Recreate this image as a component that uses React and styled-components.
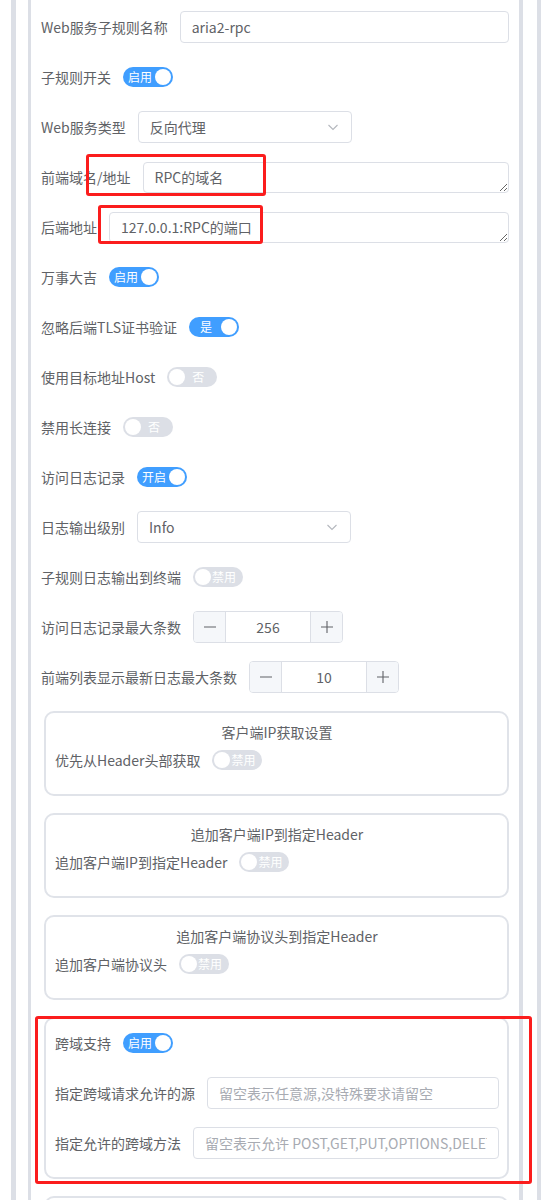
import React from "react";
import styled, { createGlobalStyle } from "styled-components";

const GlobalStyle = createGlobalStyle`
    body {
        margin: 0;
        background: #fff;
        font-family: "Noto Sans CJK SC", "Noto Sans", sans-serif;
        color: #606266;
    }
`;

function Toggle({ on, text }) {
    return (
        <Track $on={on}>
            <TrackText $on={on}>{text}</TrackText>
            <Thumb />
        </Track>
    );
}

function Stepper({ value }) {
    return (
        <StepBox>
            <StepBtn $side="left">
                <svg width="14" height="14" viewBox="0 0 14 14">
                    <path d="M1 7h12" stroke="#606266" strokeWidth="1.1" />
                </svg>
            </StepBtn>
            <StepValue>{value}</StepValue>
            <StepBtn $side="right">
                <svg width="14" height="14" viewBox="0 0 14 14">
                    <path d="M1 7h12M7 1v12" stroke="#606266" strokeWidth="1.1" />
                </svg>
            </StepBtn>
        </StepBox>
    );
}

function Select({ value }) {
    return (
        <SelectBox>
            <span>{value}</span>
            <svg width="14" height="14" viewBox="0 0 14 14">
                <path d="M2.5 5l4.5 4.5L11.5 5" fill="none" stroke="#b4b7bd" strokeWidth="1.1" />
            </svg>
        </SelectBox>
    );
}

export default function App() {
    return (
        <>
            <GlobalStyle />
            <Page>
                <Outer>
                    <Inner>
                        <Field>
                            <Label>Web服务子规则名称</Label>
                            <TextInput defaultValue="aria2-rpc" />
                        </Field>
                        <Field>
                            <Label>子规则开关</Label>
                            <Toggle on text="启用" />
                        </Field>
                        <Field>
                            <Label>Web服务类型</Label>
                            <Select value="反向代理" />
                        </Field>
                        <Field>
                            <Label>前端域名/地址</Label>
                            <TextArea rows={1} defaultValue="RPC的域名" />
                            <Mark $left={45} $top={-7} $w={180} $h={42} />
                        </Field>
                        <Field>
                            <Label>后端地址</Label>
                            <TextArea rows={1} defaultValue="127.0.0.1:RPC的端口" />
                            <Mark $left={57} $top={-6} $w={165} $h={39} />
                        </Field>
                        <Field>
                            <Label>万事大吉</Label>
                            <Toggle on text="启用" />
                        </Field>
                        <Field>
                            <Label>忽略后端TLS证书验证</Label>
                            <Toggle on text="是" />
                        </Field>
                        <Field>
                            <Label>使用目标地址Host</Label>
                            <Toggle text="否" />
                        </Field>
                        <Field>
                            <Label>禁用长连接</Label>
                            <Toggle text="否" />
                        </Field>
                        <Field>
                            <Label>访问日志记录</Label>
                            <Toggle on text="开启" />
                        </Field>
                        <Field>
                            <Label>日志输出级别</Label>
                            <Select value="Info" />
                        </Field>
                        <Field>
                            <Label>子规则日志输出到终端</Label>
                            <Toggle text="禁用" />
                        </Field>
                        <Field>
                            <Label>访问日志记录最大条数</Label>
                            <Stepper value={256} />
                        </Field>
                        <Field>
                            <Label>前端列表显示最新日志最大条数</Label>
                            <Stepper value={10} />
                        </Field>

                        <Card>
                            <CardTitle>客户端IP获取设置</CardTitle>
                            <Field>
                                <Label>优先从Header头部获取</Label>
                                <Toggle text="禁用" />
                            </Field>
                        </Card>
                        <Card>
                            <CardTitle>追加客户端IP到指定Header</CardTitle>
                            <Field>
                                <Label>追加客户端IP到指定Header</Label>
                                <Toggle text="禁用" />
                            </Field>
                        </Card>
                        <Card>
                            <CardTitle>追加客户端协议头到指定Header</CardTitle>
                            <Field>
                                <Label>追加客户端协议头</Label>
                                <Toggle text="禁用" />
                            </Field>
                        </Card>
                        <Card>
                            <Field>
                                <Label>跨域支持</Label>
                                <Toggle on text="启用" />
                            </Field>
                            <Field>
                                <Label>指定跨域请求允许的源</Label>
                                <TextInput placeholder="留空表示任意源,没特殊要求请留空" />
                            </Field>
                            <Field>
                                <Label>指定允许的跨域方法</Label>
                                <TextInput placeholder="留空表示允许 POST,GET,PUT,OPTIONS,DELETE,PATCH" />
                            </Field>
                            <Mark $left={-11} $top={-3} $w={497} $h={168} />
                        </Card>
                        {/* next card, only its top edge is in view */}
                        <Card $empty />
                    </Inner>
                </Outer>
            </Page>
        </>
    );
}

const Page = styled.div`
    padding-left: 11px;
`;

const Outer = styled.div`
    box-sizing: border-box;
    width: 530px;
    border-left: 5px solid #dcdfe6;
    border-right: 4px solid #dcdfe6;
    padding: 0 14px 0 12px;
`;

const Inner = styled.div`
    border-left: 3px solid #dcdfe6;
    border-right: 4px solid #dcdfe6;
    padding: 11px 10px 0 10px;
`;

const Field = styled.div`
    position: relative;
    display: flex;
    align-items: center;
    height: 32px;
    margin-bottom: 18px;
`;

const Label = styled.label`
    flex: none;
    padding-right: 12px;
    font-size: 14px;
    line-height: 32px;
    color: #606266;
    white-space: nowrap;
`;

const TextInput = styled.input`
    flex: 1;
    min-width: 0;
    box-sizing: border-box;
    height: 32px;
    padding: 0 11px;
    border: 1px solid #dcdfe6;
    border-radius: 4px;
    font-family: inherit;
    font-size: 14px;
    color: #606266;
    outline: none;
    &::placeholder {
        color: #a8abb2;
    }
`;

const TextArea = styled.textarea`
    flex: 1;
    min-width: 0;
    box-sizing: border-box;
    height: 31px;
    padding: 4px 11px;
    border: 1px solid #dcdfe6;
    border-radius: 4px;
    font-family: inherit;
    font-size: 14px;
    line-height: 21px;
    color: #606266;
    resize: vertical;
    overflow: hidden;
    outline: none;
`;

const SelectBox = styled.div`
    box-sizing: border-box;
    width: 214px;
    height: 32px;
    display: flex;
    align-items: center;
    justify-content: space-between;
    padding: 0 11px;
    border: 1px solid #dcdfe6;
    border-radius: 4px;
    font-size: 14px;
    color: #606266;
`;

const Track = styled.span`
    box-sizing: border-box;
    display: inline-flex;
    align-items: center;
    flex-direction: ${(p) => (p.$on ? "row" : "row-reverse")};
    width: 50px;
    height: 20px;
    padding: 2px;
    border-radius: 10px;
    background: ${(p) => (p.$on ? "#409eff" : "#dcdfe6")};
`;

const TrackText = styled.span`
    flex: 1;
    padding-right: ${(p) => (p.$on ? "0" : "4px")};
    text-align: center;
    font-size: 12px;
    line-height: 16px;
    color: #fff;
    white-space: nowrap;
`;

const Thumb = styled.span`
    flex: none;
    width: 16px;
    height: 16px;
    border-radius: 50%;
    background: #fff;
`;

const StepBox = styled.div`
    box-sizing: border-box;
    display: flex;
    width: 150px;
    height: 32px;
    border: 1px solid #dcdfe6;
    border-radius: 4px;
    overflow: hidden;
`;

const StepBtn = styled.span`
    flex: none;
    width: 31px;
    display: flex;
    align-items: center;
    justify-content: center;
    background: #f5f7fa;
    ${(p) => (p.$side === "left" ? "border-right" : "border-left")}: 1px solid #dcdfe6;
`;

const StepValue = styled.span`
    flex: 1;
    text-align: center;
    font-size: 14px;
    line-height: 30px;
    color: #606266;
`;

const Card = styled.div`
    position: relative;
    margin: 0 0 17px 3px;
    padding: 8px 8px 0 9px;
    border: 2px solid #e0e3e9;
    border-radius: 10px;
    min-height: ${(p) => (p.$empty ? "75px" : "0")};
`;

const CardTitle = styled.div`
    text-align: center;
    font-size: 14px;
    line-height: 23px;
    color: #606266;
`;

const Mark = styled.div`
    position: absolute;
    left: ${(p) => p.$left}px;
    top: ${(p) => p.$top}px;
    width: ${(p) => p.$w}px;
    height: ${(p) => p.$h}px;
    box-sizing: border-box;
    border: 3px solid #fb1d1d;
    border-radius: 3px;
    pointer-events: none;
`;
